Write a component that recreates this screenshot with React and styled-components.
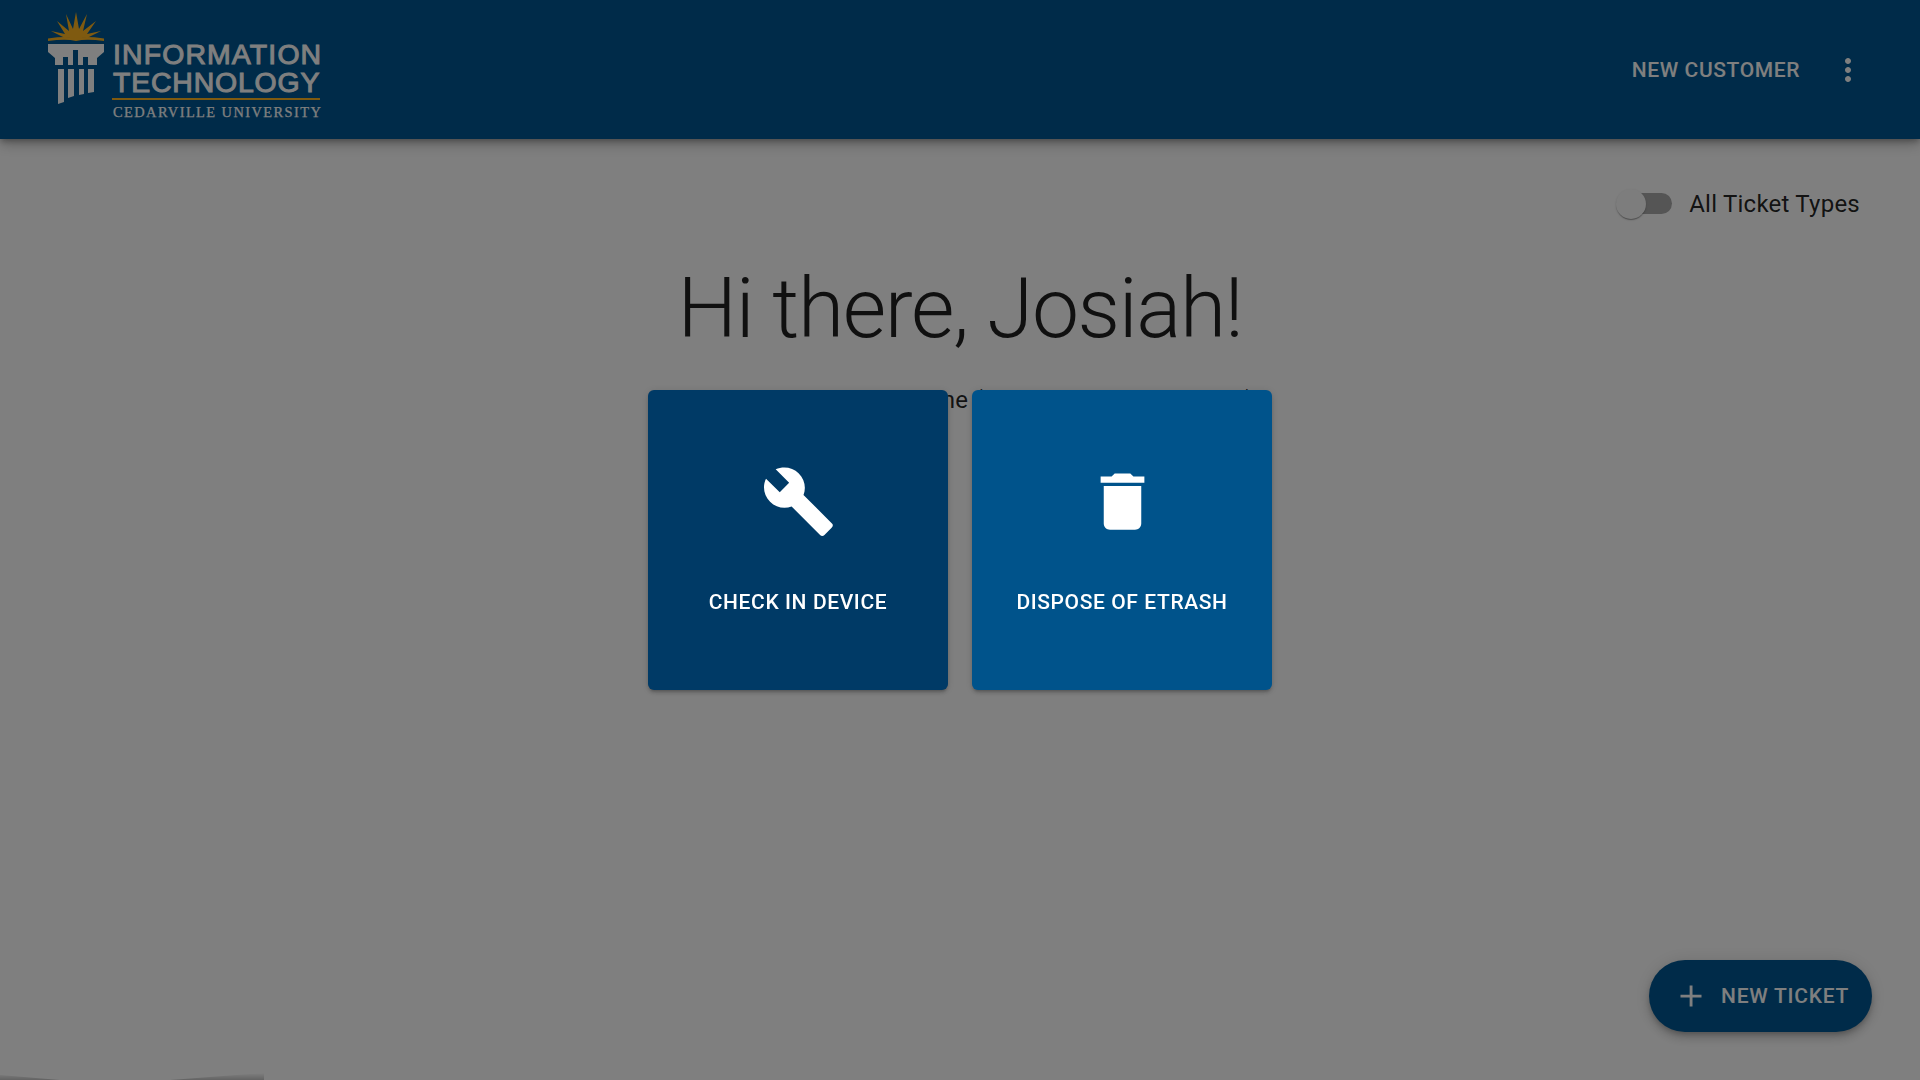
import React from "react";
import styled, { createGlobalStyle } from "styled-components";

const Global = createGlobalStyle`
  html, body { margin: 0; padding: 0; height: 100%; overflow: hidden; background: #fff; }
  body { font-family: Roboto, "Liberation Sans", sans-serif; color: rgba(0,0,0,.87); }
  #root { height: 100%; }
`;

const Page = styled.div`
  position: relative;
  height: 1080px;
  display: flex;
  flex-direction: column;
  overflow: hidden;
`;

const Header = styled.header`
  height: 139px;
  flex: none;
  background: #005792;
  color: #fff;
  display: flex;
  align-items: center;
  justify-content: space-between;
  padding: 0 54px 0 48px;
  box-shadow: 0 3px 6px -1px rgba(0,0,0,.3), 0 6px 12px rgba(0,0,0,.14), 0 2px 18px rgba(0,0,0,.12);
  position: relative;
`;

const Logo = styled.div`
  display: flex;
  align-items: flex-start;
  gap: 8px;
  height: 139px;
`;

const LogoMark = styled.svg`
  width: 56px;
  height: 139px;
  flex: none;
`;

const LogoWords = styled.div`
  width: 208px;
  padding-top: 41px;
  display: flex;
  flex-direction: column;
  font-family: "Liberation Sans", Arial, sans-serif;
`;

const LogoLine = styled.div`
  font-size: 28.4px;
  line-height: ${p => p.$height}px;
  height: ${p => p.$height}px;
  letter-spacing: ${p => p.$spacing}px;
  white-space: nowrap;
  font-weight: 400;
  padding-left: 1px;
  -webkit-text-stroke: 1px #fff;
`;

const LogoRule = styled.div`
  height: 2px;
  background: #ffb520;
  margin-top: 2px;
`;

const LogoSub = styled.div`
  font-family: "Liberation Serif", serif;
  font-size: 14.4px;
  line-height: 16px;
  margin-top: 4px;
  padding-left: 1px;
  letter-spacing: 1.44px;
  white-space: nowrap;
  -webkit-text-stroke: 0.25px #fff;
`;

const Actions = styled.div`
  display: flex;
  align-items: center;
  gap: 30px;
`;

const TextButton = styled.button`
  all: unset;
  font-family: Roboto, sans-serif;
  font-weight: 500;
  font-size: 21px;
  letter-spacing: .6px;
  line-height: 24px;
  text-transform: uppercase;
  color: #fff;
`;

const MoreIcon = styled.svg`
  width: 36px;
  height: 36px;
  fill: #fff;
  display: block;
`;

const Main = styled.main`
  flex: 1;
  display: flex;
  flex-direction: column;
  align-items: center;
`;

const ToggleRow = styled.label`
  align-self: flex-end;
  display: flex;
  align-items: center;
  gap: 17px;
  margin: 50px 60px 0 0;
  font-size: 24px;
  line-height: 30px;
  letter-spacing: .24px;
`;

const Switch = styled.span`
  position: relative;
  display: block;
  width: 51px;
  height: 21px;
  margin: -1px 0 0 2px;
  border-radius: 11px;
  background: #aaa;
`;

const Thumb = styled.span`
  position: absolute;
  left: -5px;
  top: -4px;
  width: 30px;
  height: 30px;
  border-radius: 50%;
  background: #fafafa;
  box-shadow: 0 2px 1px -1px rgba(0,0,0,.2), 0 1px 1px rgba(0,0,0,.14), 0 1px 3px rgba(0,0,0,.12);
`;

const Heading = styled.h1`
  margin: 34px 0 0;
  font-weight: 300;
  font-size: 84px;
  line-height: 112px;
  letter-spacing: -1.35px;
  text-align: center;
`;

const Subtitle = styled.p`
  margin: 19px 0 0;
  font-size: 24px;
  line-height: 32px;
  letter-spacing: .24px;
  text-align: center;
  white-space: nowrap;
`;

const Fab = styled.button`
  all: unset;
  position: absolute;
  right: 48px;
  bottom: 48px;
  height: 72px;
  width: 223px;
  box-sizing: border-box;
  padding-left: 24px;
  border-radius: 36px;
  background: #005792;
  color: #fff;
  display: flex;
  align-items: center;
  gap: 12px;
  font-family: Roboto, sans-serif;
  font-weight: 500;
  font-size: 21px;
  letter-spacing: .75px;
  text-transform: uppercase;
  box-shadow: 0 3px 5px -1px rgba(0,0,0,.2), 0 6px 10px rgba(0,0,0,.14), 0 1px 18px rgba(0,0,0,.12);
`;

const FabIcon = styled.svg`
  width: 36px;
  height: 36px;
  fill: #fff;
  display: block;
`;

const Sliver = styled.svg`
  position: absolute;
  left: 0;
  bottom: 0;
  width: 264px;
  height: 8px;
`;

const Backdrop = styled.div`
  position: fixed;
  inset: 0;
  background: rgba(0,0,0,.5);
  display: flex;
  align-items: center;
  justify-content: center;
  gap: 24px;
`;

const TypeCard = styled.button`
  all: unset;
  width: 300px;
  height: 300px;
  box-sizing: border-box;
  padding-top: 74px;
  border-radius: 6px;
  background: ${p => p.$bg};
  color: #fff;
  display: flex;
  flex-direction: column;
  align-items: center;
  box-shadow: 0 3px 3px -2px rgba(0,0,0,.2), 0 3px 4px rgba(0,0,0,.14), 0 1px 8px rgba(0,0,0,.12);
`;

const CardIcon = styled.svg`
  width: 75px;
  height: 75px;
  fill: #fff;
  display: block;
`;

const CardLabel = styled.span`
  margin-top: 51px;
  font-family: Roboto, sans-serif;
  font-weight: 500;
  font-size: 21px;
  line-height: 24px;
  letter-spacing: .6px;
  text-transform: uppercase;
`;

export default function App() {
  return (
    <>
      <Global />
      <Page>
        <Header>
          <Logo>
            <LogoMark viewBox="48 0 56 139">
              <path
                fill="#ffb520"
                d="M76 12 L79 29 L87 14 L83 31 L96 21 L87 34 L101 31 L89 37 Q82 37 76 40 Q70 37 63 37 L51 31 L65 34 L57 21 L69 31 L66 14 L73 29 Z"
              />
              <path fill="#ffb520" d="M48 38.5 Q66 36 76 38 Q86 36 104 38.5 V41 Q86 38.5 76 41 Q66 38.5 48 41 Z" />
              <g fill="#fff">
                <path d="M48 44 H104 V52 L97 58 V65 H88 V57 H83 V65 H78 V50 H73 V65 H68 V57 H63 V65 H55 V58 L48 52 Z" />
                <path d="M58 69 H64 V102 L58 104 Z" />
                <path d="M68 69 H74 V96 L68 98 Z" />
                <path d="M79 69 H84 V94 L79 95 Z" />
                <path d="M88 69 H94 V92 L88 93 Z" />
              </g>
            </LogoMark>
            <LogoWords>
              <LogoLine $height={27} $spacing={1.15}>INFORMATION</LogoLine>
              <LogoLine $height={28} $spacing={0.85}>TECHNOLOGY</LogoLine>
              <LogoRule />
              <LogoSub>CEDARVILLE UNIVERSITY</LogoSub>
            </LogoWords>
          </Logo>
          <Actions>
            <TextButton>New Customer</TextButton>
            <MoreIcon viewBox="0 0 24 24">
              <path d="M12 8c1.1 0 2-.9 2-2s-.9-2-2-2-2 .9-2 2 .9 2 2 2zm0 2c-1.1 0-2 .9-2 2s.9 2 2 2 2-.9 2-2-.9-2-2-2zm0 6c-1.1 0-2 .9-2 2s.9 2 2 2 2-.9 2-2-.9-2-2-2z" />
            </MoreIcon>
          </Actions>
        </Header>
        <Main>
          <ToggleRow>
            <Switch><Thumb /></Switch>
            All Ticket Types
          </ToggleRow>
          <Heading>Hi there, Josiah!</Heading>
          <Subtitle>Can you pick a ticket for me (and I will be glad to help)</Subtitle>
        </Main>
        <Fab>
          <FabIcon viewBox="0 0 24 24"><path d="M19 13h-6v6h-1.9v-6H5v-1.9h6.1V5H13v6.1h6z" /></FabIcon>
          New Ticket
        </Fab>
        <Sliver viewBox="0 0 264 8">
          <defs>
            <linearGradient id="sliverFade" x1="0" y1="0" x2="0" y2="1">
              <stop offset="0" stopColor="#000" stopOpacity="0" />
              <stop offset="1" stopColor="#000" stopOpacity=".22" />
            </linearGradient>
          </defs>
          <path d="M0 3 L60 8 H170 L264 1 V8 H0 Z" fill="url(#sliverFade)" />
        </Sliver>
        <Backdrop>
          <TypeCard $bg="#003a66">
            <CardIcon viewBox="0 0 24 24">
              <path d="M22.7 19l-9.1-9.1c.9-2.3.4-5-1.5-6.9-2-2-5-2.4-7.4-1.3L9 6 6 9 1.6 4.7C.4 7.1.9 10.1 2.9 12.1c1.9 1.9 4.6 2.4 6.9 1.5l9.1 9.1c.4.4 1 .4 1.4 0l2.3-2.3c.5-.4.5-1.1.1-1.4z" />
            </CardIcon>
            <CardLabel>Check in device</CardLabel>
          </TypeCard>
          <TypeCard $bg="#00538b">
            <CardIcon viewBox="0 0 24 24">
              <path d="M6 19c0 1.1.9 2 2 2h8c1.1 0 2-.9 2-2V7H6v12zM19 4h-3.5l-1-1h-5l-1 1H5v2h14V4z" />
            </CardIcon>
            <CardLabel>Dispose of eTrash</CardLabel>
          </TypeCard>
        </Backdrop>
      </Page>
    </>
  );
}
